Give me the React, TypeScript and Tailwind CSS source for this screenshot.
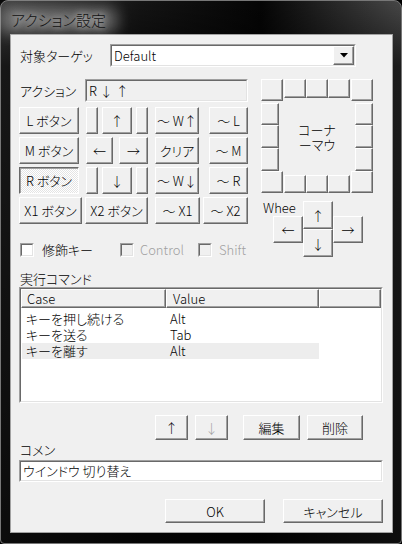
import React from "react";

const font = "font-['Noto_Sans_CJK_JP','Noto_Sans',sans-serif] font-light [font-feature-settings:'palt']";

// classic 3D edges
const raised =
  "border border-t-white border-l-white border-r-[#696969] border-b-[#696969] shadow-[inset_-1px_-1px_0_#a0a0a0] bg-[#f0f0f0]";
const pushed =
  "border border-t-[#696969] border-l-[#696969] border-r-white border-b-white shadow-[inset_1px_1px_0_#a0a0a0] bg-[image:conic-gradient(#ffffff_25%,#e4e4e4_0_50%,#ffffff_0_75%,#e4e4e4_0)] bg-[length:2px_2px]";
const sunkenOuter = "border border-t-[#a0a0a0] border-l-[#a0a0a0] border-r-white border-b-white";
const sunkenInner = "border border-t-[#696969] border-l-[#696969] border-r-[#e3e3e3] border-b-[#e3e3e3]";

function Btn({
  children,
  className = "",
  disabled = false,
  down = false,
}: {
  children?: React.ReactNode;
  className?: string;
  disabled?: boolean;
  down?: boolean;
}) {
  return (
    <div
      className={`flex shrink-0 items-center justify-center whitespace-nowrap text-[13px] leading-none ${
        down ? pushed : raised
      } ${disabled ? "text-[#a0a0a0]" : "text-black"} ${className}`}
    >
      {children}
    </div>
  );
}

function Check({ label, disabled = false, gap, className = "" }: { label: string; disabled?: boolean; gap: string; className?: string }) {
  return (
    <div className={`flex items-center ${className}`}>
      <div className={`w-[14px] h-[14px] ${sunkenOuter}`}>
        <div className={`w-full h-full ${sunkenInner} ${disabled ? "bg-[#f0f0f0]" : "bg-white"}`} />
      </div>
      <span className={`${gap} text-[13px] leading-none ${disabled ? "text-[#a0a0a0]" : "text-black"}`}>{label}</span>
    </div>
  );
}

function CornerMouse() {
  return (
    <div className="grid w-[112px] h-[114px] grid-cols-[23px_22px_22px_22px_23px] grid-rows-[24px_22px_23px_23px_22px]">
      <Btn className="w-[22px] h-[22px]" />
      <Btn className="h-[19px]" />
      <Btn className="h-[19px]" />
      <Btn className="h-[19px]" />
      <Btn className="w-[22px] h-[22px] justify-self-end" />

      <Btn className="w-[18px] h-full" />
      <div className="col-span-3 row-span-3 flex flex-col items-center justify-center text-[13px] leading-[15px]">
        <span>コーナ</span>
        <span>ーマウ</span>
      </div>
      <Btn className="w-[18px] h-full justify-self-end" />
      <Btn className="w-[18px] h-full" />
      <Btn className="w-[18px] h-full justify-self-end" />
      <Btn className="w-[18px] h-full" />
      <Btn className="w-[18px] h-full justify-self-end" />

      <Btn className="w-[22px] h-[22px] self-end" />
      <Btn className="h-[18px] self-end" />
      <Btn className="h-[18px] self-end" />
      <Btn className="h-[18px] self-end" />
      <Btn className="w-[22px] h-[22px] self-end justify-self-end" />
    </div>
  );
}

function Wheel() {
  return (
    <div className="mt-[8px] grid grid-cols-[12px_30px_30px_30px] grid-rows-[15px_13px_14px_14px]">
      <span className="col-start-1 col-span-2 row-start-1 pl-[2px] text-[13px] leading-[13px]">Whee</span>
      <Btn className="col-start-3 row-start-1 row-span-2">↑</Btn>
      <Btn className="col-start-2 row-start-2 row-span-2">←</Btn>
      <Btn className="col-start-4 row-start-2 row-span-2">→</Btn>
      <Btn className="col-start-3 row-start-3 row-span-2">↓</Btn>
    </div>
  );
}

const rows = [
  { c: "キーを押し続ける", v: "Alt" },
  { c: "キーを送る", v: "Tab" },
  { c: "キーを離す", v: "Alt", sel: true },
];

export default function App() {
  return (
    <div className={`w-[402px] h-[544px] bg-black ${font}`}>
      <div className="flex flex-col w-full h-full rounded-t-[8px] rounded-b-[4px] border border-[#777777] bg-[image:linear-gradient(180deg,rgba(0,0,0,0)_0%,rgba(0,0,0,0.6)_12%,rgba(0,0,0,0.8)_100%),linear-gradient(90deg,#3a3a3a_0%,#141414_35%,#050505_65%,#474747_100%)]">
        {/* title bar */}
        <div className="h-[33px] pl-[10px] pt-[6px]">
          <span className="relative inline-block text-[15px] leading-[20px] text-[#111111] [text-shadow:0_0_6px_rgba(255,255,255,0.85),0_0_12px_rgba(255,255,255,0.55)]">
            <span className="absolute -inset-x-[12px] -inset-y-[4px] rounded-[10px] bg-white/30 blur-[7px]" />
            <span className="relative">アクション設定</span>
          </span>
        </div>

        {/* client */}
        <div className="ml-[9px] w-[383px] h-[499px] border border-[#a2a2a2] bg-[#f0f0f0] text-black">
          <div className="flex flex-col pl-[8px] pr-[9px]">
            {/* target */}
            <div className="mt-[9px] flex items-center h-[23px]">
              <span className="w-[91px] text-[13px] leading-none pl-[1px]">対象ターゲッ</span>
              <div className={`w-[246px] h-[23px] ${sunkenOuter}`}>
                <div className={`flex h-full ${sunkenInner} bg-white`}>
                  <span className="flex-1 pl-[2px] text-[13px] leading-[19px]">Default</span>
                  <Btn className="w-[21px] h-full">
                    <svg width="8" height="5" viewBox="0 0 8 5">
                      <path d="M0 0H8L4 4.5Z" fill="#000" />
                    </svg>
                  </Btn>
                </div>
              </div>
            </div>

            {/* main area */}
            <div className="mt-[12px] flex">
              <div className="flex flex-col w-[229px]">
                <div className="flex items-center h-[23px]">
                  <span className="w-[66px] pl-[1px] text-[13px] leading-none">アクション</span>
                  <div className={`w-[163px] h-[23px] ${sunkenOuter}`}>
                    <div className={`h-full ${sunkenInner} pl-[2px] text-[13px] leading-[19px]`}>R ↓ ↑</div>
                  </div>
                </div>

                <div className="mt-[5px] flex flex-col gap-[3px]">
                  <div className="flex h-[27px]">
                    <Btn className="w-[60px]">L ボタン</Btn>
                    <Btn className="ml-[7px] w-[12px]" />
                    <Btn className="ml-[4px] w-[30px]">↑</Btn>
                    <Btn className="ml-[4px] w-[12px]" />
                    <Btn className="ml-[7px] w-[44px]">～ W↑</Btn>
                    <Btn className="ml-[10px] w-[39px]">～ L</Btn>
                  </div>
                  <div className="flex h-[27px]">
                    <Btn className="w-[60px]">M ボタン</Btn>
                    <Btn className="ml-[7px] w-[27px]">←</Btn>
                    <Btn className="ml-[6px] w-[29px]">→</Btn>
                    <Btn className="ml-[7px] w-[44px]">クリア</Btn>
                    <Btn className="ml-[10px] w-[39px]">～ M</Btn>
                  </div>
                  <div className="flex h-[27px]">
                    <Btn down className="w-[60px]">R ボタン</Btn>
                    <Btn className="ml-[7px] w-[12px]" />
                    <Btn className="ml-[4px] w-[30px]">↓</Btn>
                    <Btn className="ml-[4px] w-[12px]" />
                    <Btn className="ml-[7px] w-[44px]">～ W↓</Btn>
                    <Btn className="ml-[10px] w-[39px]">～ R</Btn>
                  </div>
                  <div className="flex h-[27px]">
                    <Btn className="w-[63px]">X1 ボタン</Btn>
                    <Btn className="ml-[3px] w-[63px]">X2 ボタン</Btn>
                    <Btn className="ml-[7px] w-[45px]">～ X1</Btn>
                    <Btn className="ml-[3px] w-[45px]">～ X2</Btn>
                  </div>
                </div>

                <div className="mt-[18px] flex items-center h-[15px] pl-[1px]">
                  <Check label="修飾キー" gap="ml-[8px]" className="w-[100px]" />
                  <Check label="Control" disabled gap="ml-[6px]" className="w-[78px]" />
                  <Check label="Shift" disabled gap="ml-[7px]" />
                </div>
              </div>

              <div className="ml-[13px] flex flex-col w-[112px]">
                <CornerMouse />
                <Wheel />
              </div>
            </div>

            {/* command list */}
            <div className="mt-[14px] h-[16px] pl-[1px] text-[13px] leading-[16px]">実行コマンド</div>
            <div className={`h-[116px] ${sunkenOuter}`}>
              <div className={`flex flex-col h-full ${sunkenInner} bg-white overflow-hidden`}>
                <div className="flex h-[19px] shrink-0 text-[13px] leading-none">
                  <div className={`w-[145px] flex items-center pl-[5px] ${raised}`}>Case</div>
                  <div className={`w-[153px] flex items-center pl-[6px] ${raised}`}>Value</div>
                  <div className={`flex-1 ${raised}`} />
                </div>
                <div className="pt-[3px] flex flex-col">
                  {rows.map((r) => (
                    <div
                      key={r.c}
                      className={`ml-[1px] flex w-[297px] h-[16px] items-center text-[13px] leading-[16px] ${
                        r.sel ? "bg-[#ededed]" : ""
                      }`}
                    >
                      <span className="w-[144px] pl-[4px]">{r.c}</span>
                      <span className="pl-[4px]">{r.v}</span>
                    </div>
                  ))}
                </div>
              </div>
            </div>

            {/* list buttons */}
            <div className="mt-[12px] flex h-[25px] pl-[136px]">
              <Btn className="w-[33px]">↑</Btn>
              <Btn disabled className="ml-[7px] w-[33px]">↓</Btn>
              <Btn className="ml-[15px] w-[57px]">編集</Btn>
              <Btn className="ml-[7px] w-[56px]">削除</Btn>
            </div>

            {/* comment */}
            <div className="mt-[2px] h-[15px] pl-[1px] text-[13px] leading-[15px]">コメン</div>
            <div className={`mt-[3px] h-[22px] ${sunkenOuter}`}>
              <div className={`h-full ${sunkenInner} bg-white pl-[2px] text-[13px] leading-[18px]`}>ウインドウ 切り替え</div>
            </div>

            {/* ok / cancel */}
            <div className="mt-[17px] flex justify-end h-[24px]">
              <Btn className="w-[100px]">OK</Btn>
              <Btn className="ml-[18px] w-[100px]">キャンセル</Btn>
            </div>
          </div>
        </div>
      </div>
    </div>
  );
}
